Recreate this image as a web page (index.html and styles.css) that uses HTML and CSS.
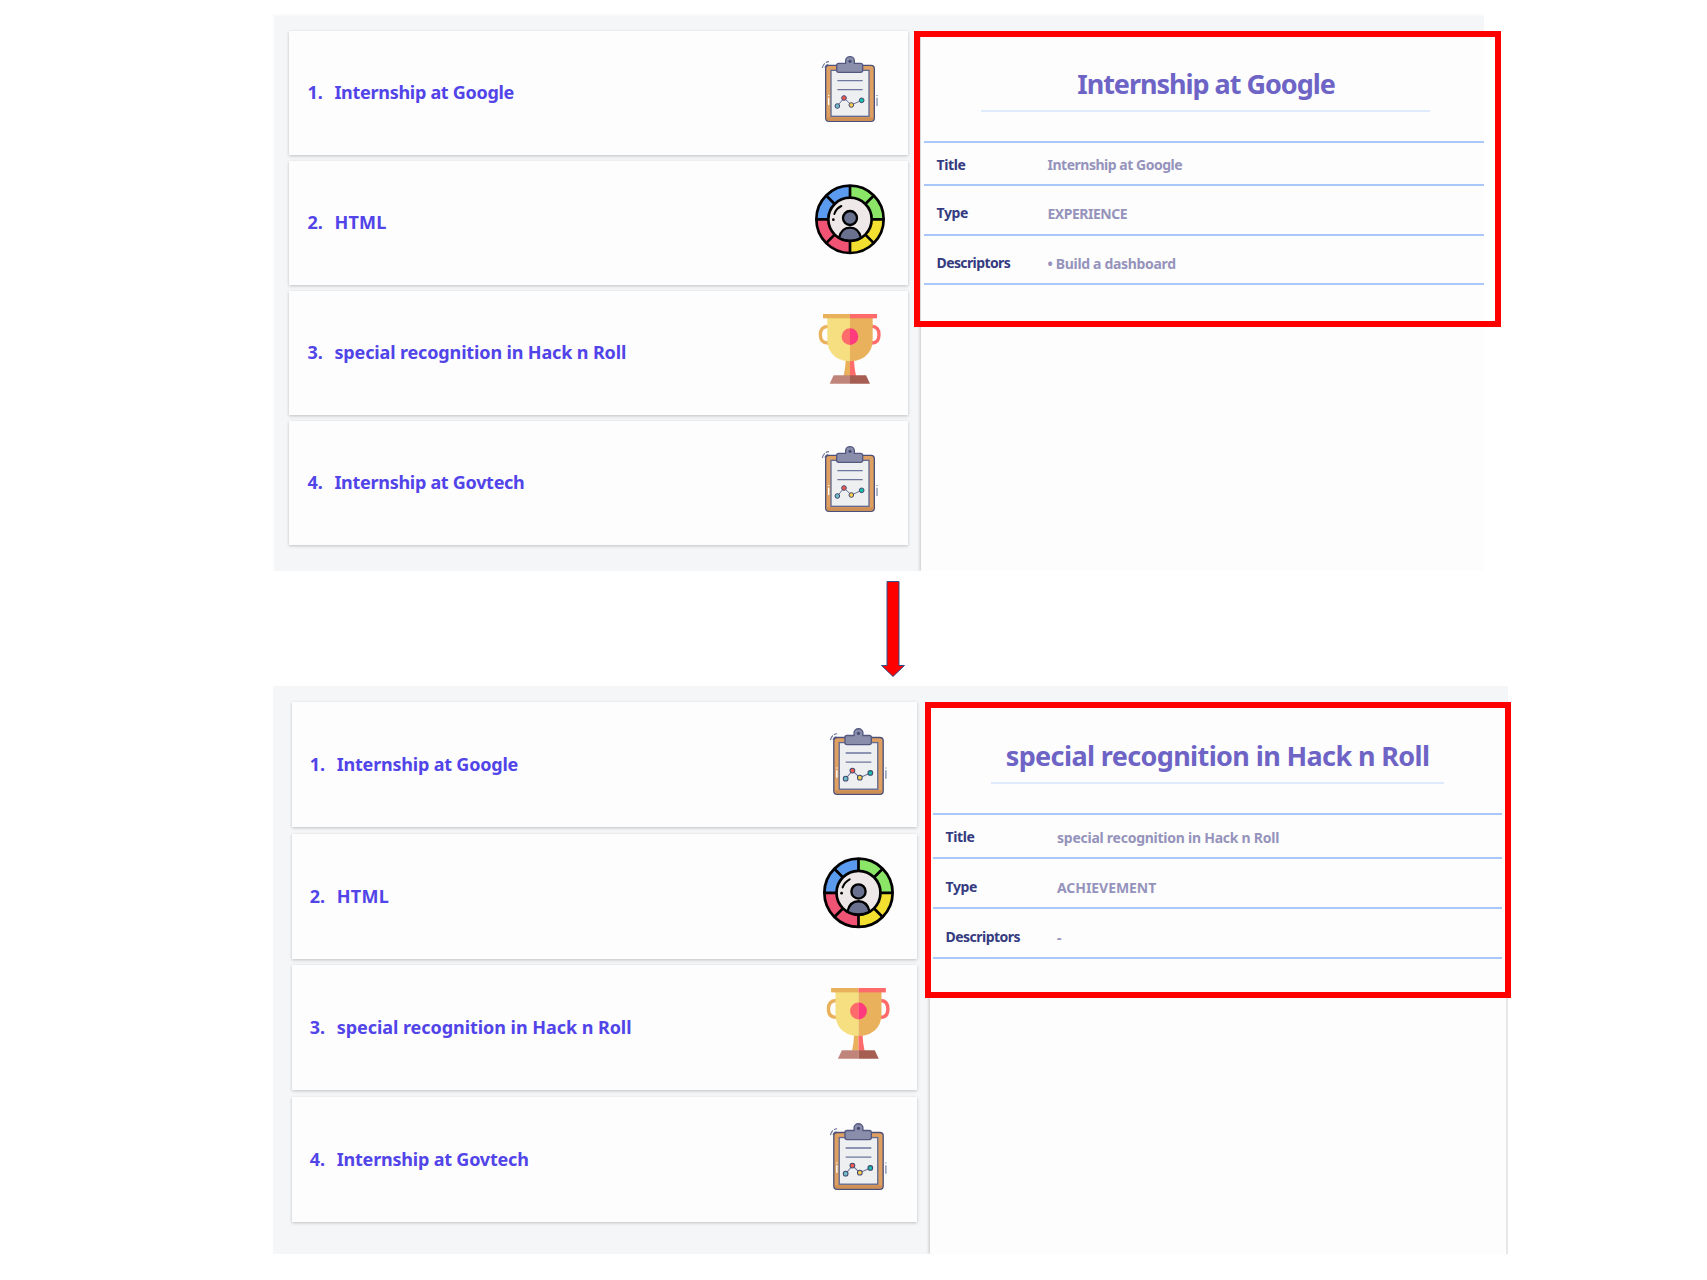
FILE: index.html
```html
<!DOCTYPE html>
<html lang="en">
<head>
<meta charset="utf-8">
<title>Portfolio items</title>
<link rel="stylesheet" href="styles.css">
</head>
<body>
<svg class="sprite" aria-hidden="true">
  <symbol id="clipboard" viewBox="45 42 213 213">
    <path d="M67 84Q70 67 87 65M75 83Q77 75 85 74" fill="none" stroke="#6a7198" stroke-width="3.500" stroke-dasharray="16 4"/>
    <rect x="77" y="76" width="146" height="168" rx="10" fill="#e0a062" stroke="#4b5078" stroke-width="4"/>
    <path d="M80 232H220V236Q220 242 212 242H88Q80 242 80 236Z" fill="#d08f55"/>
    <rect x="93" y="91" width="114" height="138" fill="#eeeff0" stroke="#626b91" stroke-width="4"/>
    <path d="M112 122H188M112 149H188" stroke="#6e779e" stroke-width="4"/>
    <path d="M137 70V62A13 12 0 0 1 163 62V70H182Q188 70 188 76V91Q188 97 182 97H116Q110 97 110 91V76Q110 70 116 70Z" fill="#8a8eab" stroke="#535880" stroke-width="4"/>
    <circle cx="150" cy="64" r="4" fill="#3f456c" stroke="#50567e" stroke-width="2"/>
    <path d="M112 198L132 174L154 195L185 181" fill="none" stroke="#6c7196" stroke-width="3"/>
    <g stroke="#414a73" stroke-width="3">
      <circle cx="112" cy="198" r="7" fill="#6fbcc4"/>
      <circle cx="132" cy="174" r="7" fill="#f5594e"/>
      <circle cx="154" cy="195" r="7" fill="#f8cb48"/>
      <circle cx="185" cy="181" r="7" fill="#16bfa9"/>
    </g>
    <path d="M86 165V168M86 173V195" stroke="#fff" stroke-width="4"/>
    <path d="M231 165V168M231 173V198" stroke="#888fae" stroke-width="4"/>
  </symbol>
  <symbol id="wheel" viewBox="45 42 213 213">
    <g transform="translate(150 148)">
      <path d="M0 0V-101A101 101 0 0 1 101 0Z" fill="#8be567"/>
      <path d="M0 0H101A101 101 0 0 1 0 101Z" fill="#f3df30"/>
      <path d="M0 0V101A101 101 0 0 1 -101 0Z" fill="#f05374"/>
      <path d="M0 0H-101A101 101 0 0 1 0 -101Z" fill="#5a9bef"/>
      <path d="M0 -100V100M-100 0H100M-70 -70L70 70M-70 70L70 -70" stroke="#000" stroke-width="8"/>
      <circle r="101" fill="none" stroke="#000" stroke-width="8"/>
      <circle r="65" fill="#eee9e8" stroke="#000" stroke-width="8"/>
      <path d="M-33 56Q-26 25 0 25T33 56Q0 72 -33 56Z" fill="#69718f" stroke="#000" stroke-width="7"/>
      <circle cy="-4" r="21" fill="#69718f" stroke="#000" stroke-width="7"/>
      <path d="M-47 -16Q-42 -32 -26 -40" fill="none" stroke="#000" stroke-width="6" stroke-linecap="round"/>
      <circle cx="-50" cy="1" r="4"/>
    </g>
  </symbol>
  <symbol id="trophy" viewBox="45 42 213 213">
    <path d="M84 79Q61 80 61 104T84 129" fill="none" stroke="#e9b15c" stroke-width="10"/>
    <path d="M216 79Q237 80 237 104T216 129" fill="none" stroke="#ff6b6b" stroke-width="10"/>
    <path d="M137 182H150V228H131Q136 205 137 182Z" fill="#e9b15c"/>
    <path d="M150 182H162Q163 205 168 228H150Z" fill="#ff6b6b"/>
    <path d="M82 54H150V184Q113 183 95 160Q82 144 82 118Z" fill="#f5df80"/>
    <path d="M150 54H218V118Q218 144 205 160Q187 183 150 184Z" fill="#e9b15c"/>
    <path d="M69 42H150V55H69Z" fill="#e9b15c"/>
    <path d="M150 42H231V55H150Z" fill="#ff6b6b"/>
    <path d="M150 85A25 25 0 0 0 150 135Z" fill="#ff6b6b"/>
    <path d="M150 85A25 25 0 0 1 150 135Z" fill="#ff3b7d"/>
    <path d="M101 226H150V251H89Z" fill="#c0857a"/>
    <path d="M150 226H198L210 251H150Z" fill="#a55e51"/>
  </symbol>
</svg>

<section class="shot shot-first">
  <ol class="cards">
    <li class="card"><span class="num">1.</span><span class="name tight">Internship at Google</span><svg class="icon"><use href="#clipboard"/></svg></li>
    <li class="card"><span class="num">2.</span><span class="name wide">HTML</span><svg class="icon"><use href="#wheel"/></svg></li>
    <li class="card"><span class="num">3.</span><span class="name">special recognition in Hack n Roll</span><svg class="icon"><use href="#trophy"/></svg></li>
    <li class="card"><span class="num">4.</span><span class="name tight">Internship at Govtech</span><svg class="icon"><use href="#clipboard"/></svg></li>
  </ol>
  <article class="detail">
    <h2 class="heading">Internship at Google</h2>
    <dl class="facts">
      <div class="fact"><dt>Title</dt><dd class="tight">Internship at Google</dd></div>
      <div class="fact"><dt>Type</dt><dd class="tight">EXPERIENCE</dd></div>
      <div class="fact"><dt class="long">Descriptors</dt><dd>• Build a dashboard</dd></div>
    </dl>
  </article>
  <div class="frame"></div>
</section>

<svg class="arrow" viewBox="0 0 26 98"><path d="M7 1.500H19V85.500H24.500L13 96.500L1.500 85.500H7Z" fill="#f00" stroke="#2f528f" stroke-width="1"/></svg>

<section class="shot shot-second">
  <ol class="cards">
    <li class="card"><span class="num">1.</span><span class="name tight">Internship at Google</span><svg class="icon"><use href="#clipboard"/></svg></li>
    <li class="card"><span class="num">2.</span><span class="name wide">HTML</span><svg class="icon raised"><use href="#wheel"/></svg></li>
    <li class="card"><span class="num">3.</span><span class="name">special recognition in Hack n Roll</span><svg class="icon raised"><use href="#trophy"/></svg></li>
    <li class="card"><span class="num">4.</span><span class="name tight">Internship at Govtech</span><svg class="icon"><use href="#clipboard"/></svg></li>
  </ol>
  <article class="detail">
    <h2 class="heading">special recognition in Hack n Roll</h2>
    <dl class="facts">
      <div class="fact"><dt>Title</dt><dd>special recognition in Hack n Roll</dd></div>
      <div class="fact"><dt>Type</dt><dd class="wide">ACHIEVEMENT</dd></div>
      <div class="fact"><dt class="long">Descriptors</dt><dd>-</dd></div>
    </dl>
  </article>
  <div class="frame"></div>
</section>
</body>
</html>
```
FILE: styles.css
```css
* { box-sizing: border-box; }

body {
  margin: 0;
  padding: 14px 0 0 273px;
  height: 1280px;
  overflow: hidden;
  background: #fff;
  font-family: "Noto Sans", sans-serif;
  font-weight: 700;
}

.sprite { position: absolute; width: 0; height: 0; }

.shot {
  position: relative;
  display: grid;
  background: #f4f6f8;
}

.shot-first {
  width: 1211px;
  height: 557px;
  padding: 15px 0 0 14.400px;
  border: 2px solid #f9fafb;
  border-bottom: 0;
  border-right: 0;
  grid-template-columns: 618.600px 1fr;
  column-gap: 13px;
}

.shot-second {
  width: 1235px;
  height: 568px;
  padding: 16px 0 0 18.500px;
  grid-template-columns: 625.500px 1fr;
  column-gap: 13px;
}

.cards {
  list-style: none;
  margin: 0;
  padding: 0;
  display: flex;
  flex-direction: column;
  gap: 6.600px;
}

.card {
  display: flex;
  align-items: flex-start;
  height: 123.500px;
  padding: 23px 22px 0 18px;
  background: #fdfdfd;
  box-shadow: 0 1px 3px rgba(0, 0, 0, .22);
  color: #5144e8;
  font-size: 18px;
  line-height: 24px;
}

.shot-second .card { height: 125px; padding: 24px 22.500px 0 18.200px; }

.num { width: 27px; margin-top: 26px; letter-spacing: 0; }
.name { margin-top: 26px; flex: 1; letter-spacing: -.140px; }
.name.tight { letter-spacing: -.290px; }
.name.wide { letter-spacing: .250px; }
.shot-second .name { letter-spacing: -.050px; }
.shot-second .name.tight { letter-spacing: -.200px; }
.shot-second .name.wide { letter-spacing: .350px; }

.icon { width: 71px; height: 71px; }
.shot-second .icon { width: 72px; height: 72px; }
.shot-second .icon.raised { margin-top: -1px; }

.detail {
  background: #fdfdfd;
  box-shadow: -1px 0 3px rgba(0, 0, 0, .2);
  padding: 0 0 0 3px;
  clip-path: inset(0 0 0 -4px);
}

.shot-second .detail {
  border-right: 2px solid #e7e7e7;
  padding: 0 4px 0 3px;
}

.heading {
  width: 449px;
  height: 81px;
  margin: 0 0 0 57px;
  padding-top: 33px;
  border-bottom: 2px solid #dfeafc;
  color: #6d64c6;
  font-size: 27px;
  line-height: 40px;
  font-weight: 700;
  letter-spacing: -1.030px;
  text-indent: 1px;
  text-align: center;
  white-space: nowrap;
}

.shot-second .heading {
  width: 453px;
  height: 82px;
  margin-left: 57.600px;
  padding-top: 34px;
  letter-spacing: -.620px;
}

.facts { margin: 29px 0 0; border-top: 2px solid #a9c7f8; }

.fact {
  display: flex;
  height: 49.300px;
  padding: 17px 0 0 12.500px;
  border-bottom: 2px solid #a9c7f8;
  font-size: 14px;
  line-height: 20px;
  letter-spacing: -.320px;
}

.fact:first-child { height: 43.300px; padding-top: 12px; }
.shot-second .fact { height: 50px; padding-top: 18px; letter-spacing: -.250px; }
.shot-second .fact:first-child { height: 44px; padding-top: 12px; }

.fact dt { width: 111px; color: #353b80; letter-spacing: -.350px; }
.fact dt.long { letter-spacing: -.600px; }
.shot-second .fact dt.long { letter-spacing: -.520px; }
.shot-second .fact dt { width: 111.500px; }
.fact dd { margin: 1px 0 0; color: #9593bb; }
.fact dd.tight { letter-spacing: -.480px; }
.fact dd.wide { letter-spacing: -.060px; }
.shot-first .fact dd { margin-top: 1px; }
.shot-first .fact:first-child dd { margin-top: 0; }

.frame {
  position: absolute;
  border: 6px solid #f00;
}

.shot-first .frame { left: 639px; top: 15px; width: 587px; height: 296px; }
.shot-second .frame { left: 652px; top: 16px; width: 586px; height: 296px; }

.arrow {
  display: block;
  width: 26px;
  height: 98px;
  margin: 9px 0 8px 606.500px;
}
```
